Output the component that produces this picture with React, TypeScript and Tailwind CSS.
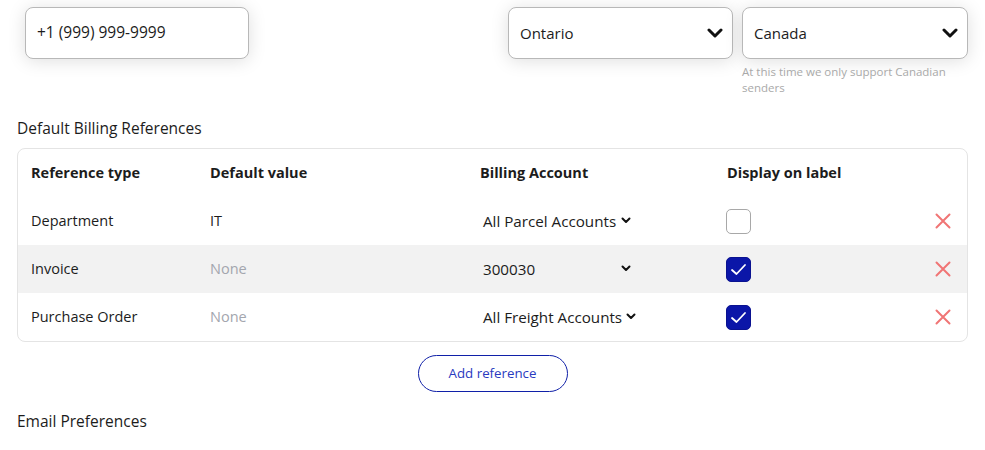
import React from "react";

function BigChevron() {
  return (
    <svg width="16" height="10" viewBox="0 0 16 10" className="shrink-0">
      <polyline points="2,2 8,8 14,2" fill="none" stroke="#111" strokeWidth="3" strokeLinecap="round" strokeLinejoin="round" />
    </svg>
  );
}

function SmallChevron() {
  return (
    <svg width="10" height="7" viewBox="0 0 10 7" className="shrink-0">
      <polyline points="1.5,1.5 5,5 8.5,1.5" fill="none" stroke="#111" strokeWidth="2" strokeLinecap="round" strokeLinejoin="round" />
    </svg>
  );
}

function RemoveIcon() {
  return (
    <svg width="16" height="16" viewBox="0 0 16 16">
      <path d="M1.5 1.5 L14.5 14.5 M14.5 1.5 L1.5 14.5" stroke="#f07575" strokeWidth="2" strokeLinecap="round" />
    </svg>
  );
}

function Checkbox({ checked }: { checked: boolean }) {
  if (!checked) {
    return <div className="w-[25px] h-[25px] rounded-[5px] border border-[#a8a8a8] bg-white" />;
  }
  return (
    <div className="w-[25px] h-[25px] rounded-[5px] border border-[#0a1290] bg-[#0b16a8] flex items-center justify-center">
      <svg width="17" height="13" viewBox="0 0 17 13">
        <polyline points="2,7 6.5,11 15,2" fill="none" stroke="#fff" strokeWidth="1.8" strokeLinecap="round" strokeLinejoin="round" />
      </svg>
    </div>
  );
}

const rows = [
  { type: "Department", value: "IT", account: "All Parcel Accounts", checked: false },
  { type: "Invoice", value: "None", account: "300030", checked: true },
  { type: "Purchase Order", value: "None", account: "All Freight Accounts", checked: true },
];

export default function App() {
  return (
    <div className="w-[985px] h-[450px] bg-white px-[17px] text-[#1c1c1c] font-['Open_Sans','Noto_Sans',sans-serif] overflow-hidden">
      {/* Contact row */}
      <div className="flex pt-[7px]">
        <div className="ml-[8px] w-[224px] h-[52px] rounded-lg border border-[#b8b8b8] bg-white shadow-[0_2px_18px_rgba(0,0,0,0.13)] flex items-center px-[11px] text-[15.5px]">
          +1 (999) 999-9999
        </div>
        <div className="ml-[259px] w-[225px] h-[52px] rounded-lg border border-[#b8b8b8] bg-white shadow-[0_2px_18px_rgba(0,0,0,0.13)] flex items-center justify-between pl-[11px] pr-[9px] text-[15px]">
          Ontario
          <BigChevron />
        </div>
        <div className="ml-[9px] w-[226px]">
          <div className="h-[52px] rounded-lg border border-[#b8b8b8] bg-white shadow-[0_2px_18px_rgba(0,0,0,0.13)] flex items-center justify-between pl-[11px] pr-[9px] text-[15px]">
            Canada
            <BigChevron />
          </div>
          <p className="mt-[5px] pr-[10px] text-[11.5px] leading-[16px] text-[#a9a9a9]">
            At this time we only support Canadian senders
          </p>
        </div>
      </div>

      {/* Billing references */}
      <h2 className="mt-[22px] text-[15.5px] leading-[20px] font-medium">Default Billing References</h2>
      <div className="mt-[10px] rounded-lg border border-[#e4e4e4] overflow-hidden text-[14.5px]">
        <div className="grid grid-cols-[179px_270px_247px_1fr] h-[48px] items-center pl-[13px] font-bold">
          <div>Reference type</div>
          <div>Default value</div>
          <div>Billing Account</div>
          <div>Display on label</div>
        </div>
        {rows.map((r, i) => (
          <div
            key={r.type}
            className={`grid grid-cols-[179px_270px_247px_1fr] h-[48px] items-center pl-[13px] ${i === 1 ? "bg-[#f2f2f2]" : ""}`}
          >
            <div>{r.type}</div>
            <div className={r.value === "None" ? "text-[#a3a6ae]" : ""}>{r.value}</div>
            <div className="pl-[3px]">
              <div className="inline-flex items-center gap-[4px] min-w-[148px] justify-between text-[15.2px]">
                <span>{r.account}</span>
                <SmallChevron />
              </div>
            </div>
            <div className="flex items-center justify-between pr-[16px]">
              <div className="-ml-[1px]">
                <Checkbox checked={r.checked} />
              </div>
              <RemoveIcon />
            </div>
          </div>
        ))}
      </div>

      <div className="flex justify-center mt-[13px]">
        <button className="w-[150px] h-[37px] rounded-full border border-[#1020a8] text-[#2a3ac0] text-[13.3px] bg-white">
          Add reference
        </button>
      </div>

      <h2 className="mt-[19px] text-[15.5px] leading-[20px] font-medium">Email Preferences</h2>
    </div>
  );
}
